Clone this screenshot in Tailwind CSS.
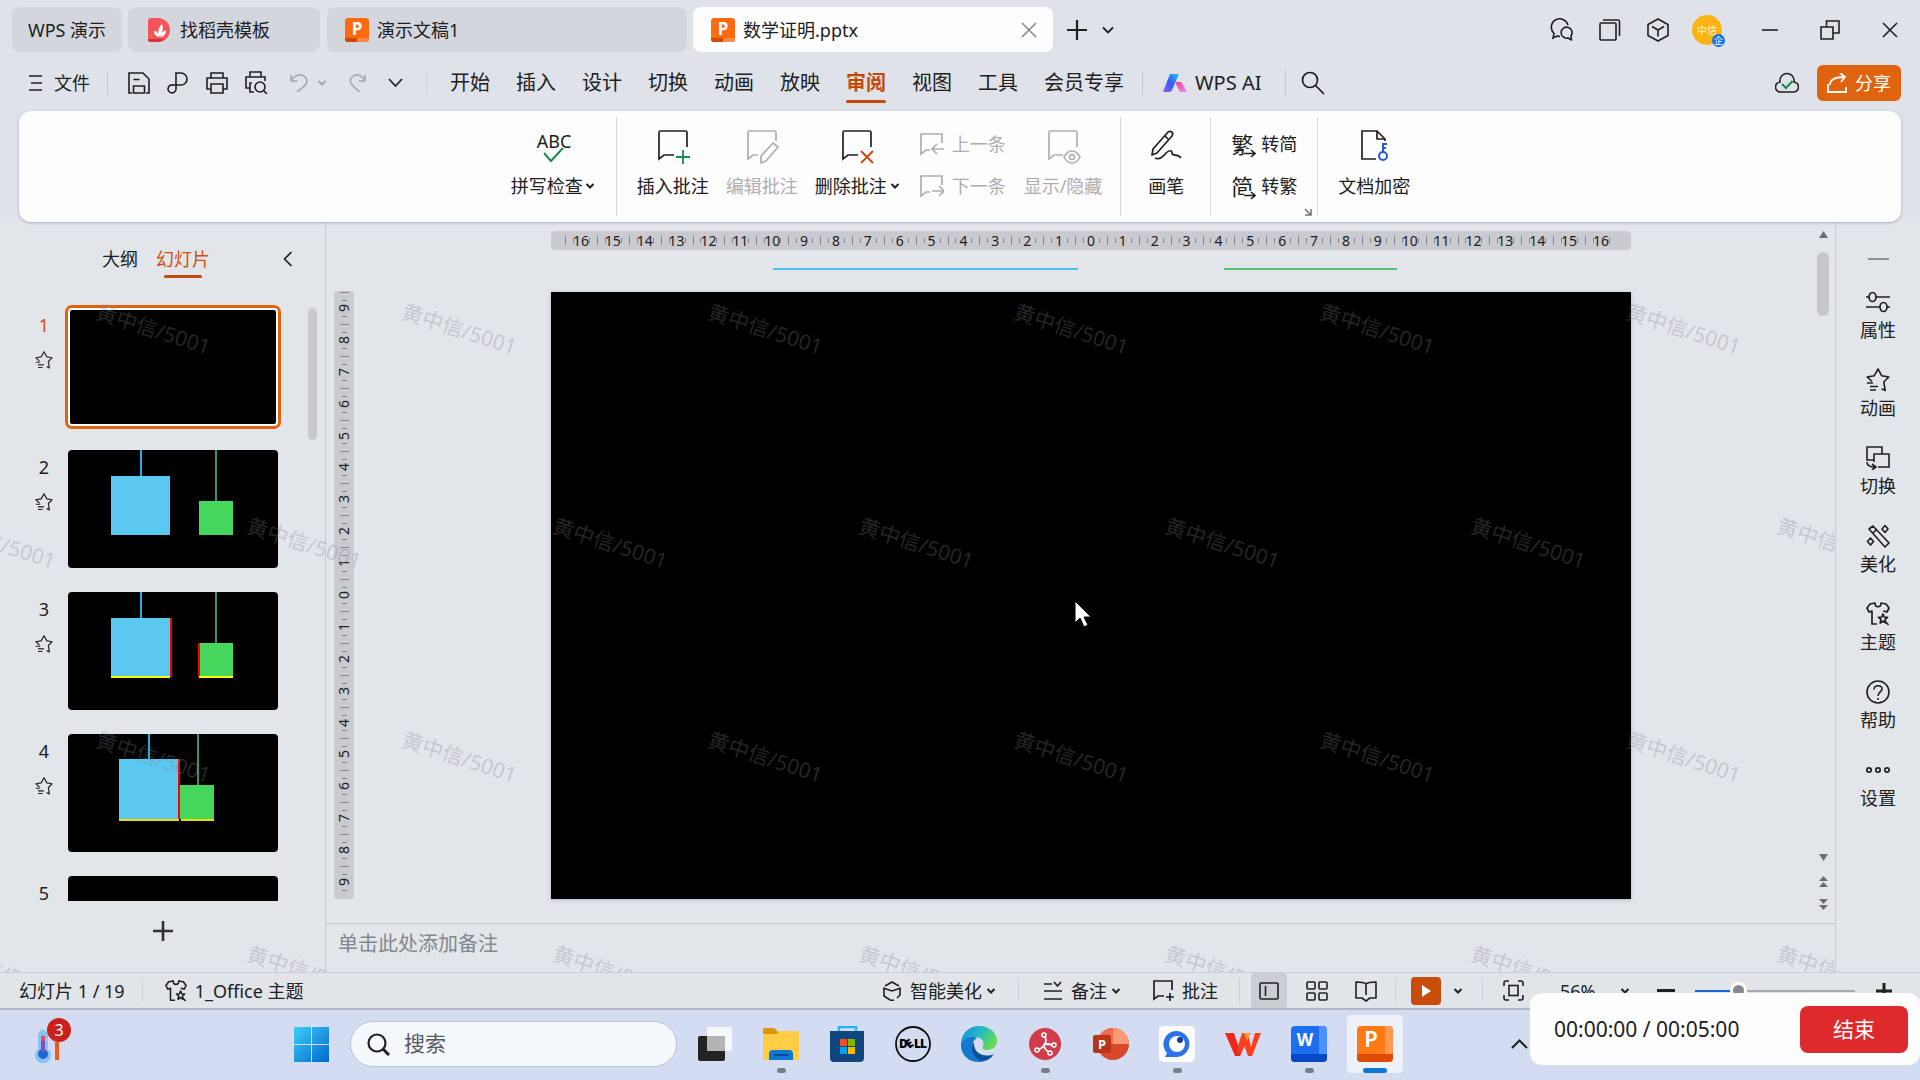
<!DOCTYPE html>
<html lang="zh-CN">
<head>
  <meta charset="UTF-8">
  <meta name="viewport" content="width=device-width, initial-scale=1">
  <title>数学证明.pptx - WPS 演示</title>
  <script src="https://cdn.jsdelivr.net/npm/@tailwindcss/browser@4"></script>
</head>
<body class="relative flex h-screen flex-col overflow-hidden bg-[#dfe2e9] font-['Noto_Sans','Noto_Sans_CJK_SC',sans-serif] text-lg leading-6 text-[#202020]">
  <!-- Shared icons -->
  <svg class="hidden">
    <symbol id="caret" viewBox="0 0 10 8"><path d="M1.500 2l3.500 3.500L8.500 2" fill="none" stroke="currentColor" stroke-width="2"/></symbol>
    <symbol id="ppt" viewBox="0 0 24 24">
      <rect width="24" height="24" rx="3" fill="#ff6a0d"/>
      <path d="M0 20h12v4H3a3 3 0 0 1-3-3z" fill="#d44800"/>
      <path d="M12 20h12v1a3 3 0 0 1-3 3h-9z" fill="#f58a4c"/>
      <text x="12" y="17" text-anchor="middle" font-size="17" font-weight="700" fill="#fff">P</text>
    </symbol>
    <symbol id="star" viewBox="0 0 24 24">
      <path d="M6 13.500L1.200 9l7-1.200L12 1l3.800 6.800 7 1.200-5 5 1.400 8.500-3.600-1.700M1 15h6M4 18.500h8M4 22h6" fill="none" stroke="currentColor" stroke-width="1.600" stroke-linejoin="round"/>
    </symbol>
    <symbol id="shirt" viewBox="0 0 24 24">
      <path d="M11 22H6V9L3 10 1 6l3-4 5-1c0 5 6 5 6 0l5 1 3 4-2 4-3-1v1" fill="none" stroke="currentColor" stroke-width="1.700" stroke-linejoin="round"/>
      <path d="M17 12l1.200 3 3.300.3-2.500 2.200.8 3.500-2.800-1.800-2.800 1.800.8-3.500-2.500-2.200 3.300-.3zM19 19l3.500 4" fill="none" stroke="currentColor" stroke-width="1.700" stroke-linejoin="round"/>
    </symbol>
    <symbol id="note" viewBox="0 0 32 32">
      <path d="M30 18V3.500A1.500 1.500 0 0 0 28.500 2h-25A1.500 1.500 0 0 0 2 3.500V30l5-4h10" fill="none" stroke="currentColor" stroke-width="1.700"/>
    </symbol>
  </svg>

  <!-- Title bar -->
  <header class="flex h-[59px] shrink-0 items-center pl-3">
    <button class="h-[45px] w-[110px] rounded-lg bg-[#d4d6dd]">WPS 演示</button>
    <button class="ml-[6px] flex h-[45px] w-[192px] items-center gap-2 rounded-lg bg-[#d4d6dd] pl-5">
      <svg class="size-6" viewBox="0 0 24 24"><path d="M0 3a3 3 0 0 1 3-3h7a12 12 0 0 1 0 24H3a3 3 0 0 1-3-3z" fill="#f5555a"/><path d="M0 21h17a12 12 0 0 1-7 3H3a3 3 0 0 1-3-3z" fill="#d8333b"/><path d="M11 19c-4-1-5-4-5-6 3 0 5 3 5 6zM11 19c-2-5 0-10 3-13 2 5 0 10-3 13zM12 19c1-4 3-6 6-7 0 4-2 7-6 7z" fill="#fff"/></svg>
      找稻壳模板
    </button>
    <button class="ml-[7px] flex h-[45px] w-[360px] items-center gap-2 rounded-lg bg-[#d4d6dd] pl-[18px]">
      <svg class="size-6"><use href="#ppt"/></svg>演示文稿1
    </button>
    <div class="ml-[6px] flex h-[45px] w-[360px] items-center gap-2 rounded-lg bg-[#fdfdfe] pr-4 pl-[18px]">
      <svg class="size-6"><use href="#ppt"/></svg>
      <span class="flex-1">数学证明.pptx</span>
      <button aria-label="关闭标签"><svg class="size-4 text-[#8a8a8a]" viewBox="0 0 16 16"><path d="M1 1l14 14M15 1L1 15" stroke="currentColor" stroke-width="1.600"/></svg></button>
    </div>
    <button class="ml-[13px]" aria-label="新建"><svg class="size-[22px]" viewBox="0 0 22 22"><path d="M11 1v20M1 11h20" stroke="currentColor" stroke-width="2.200"/></svg></button>
    <button class="ml-[14px]" aria-label="标签列表"><svg class="size-3" viewBox="0 0 12 12"><path d="M1 3.500l5 5 5-5" fill="none" stroke="currentColor" stroke-width="1.800"/></svg></button>

    <div class="ml-auto flex items-center pr-[22px]">
      <button aria-label="消息"><svg class="size-6" viewBox="0 0 24 24" fill="none" stroke="currentColor" stroke-width="1.600"><path d="M10 18.500c-2 0-2.500-.5-3-.5l-4 2 1-4.500A8.500 8.500 0 1 1 18 7"/><path d="M21.500 22l-.5-4a5.500 5.500 0 1 0-3 2z" stroke-linejoin="round"/></svg></button>
      <button class="ml-6" aria-label="窗口"><svg class="size-6" viewBox="0 0 24 24" fill="none" stroke="currentColor" stroke-width="1.600"><rect x="2" y="5" width="16" height="17" rx="1"/><path d="M5 2h15a1.500 1.500 0 0 1 1.500 1.500V18"/></svg></button>
      <button class="ml-6" aria-label="应用"><svg class="size-6" viewBox="0 0 24 24" fill="none" stroke="currentColor" stroke-width="1.600" stroke-linejoin="round"><path d="M12 1l10 5.500v11L12 23 2 17.500v-11z"/><path d="M6 8.500l6 3.500 6-3.500M12 12v6.500"/></svg></button>
      <button class="relative ml-[22px] size-[30px] rounded-full bg-[#fab414] text-[10px] leading-[30px] text-[#fff1c8]">中信
        <span class="absolute -right-[3px] -bottom-[2px] size-[13px] rounded-full bg-[#1473f0] text-[9px] leading-[13px] text-white">企</span>
      </button>
      <button class="ml-10" aria-label="最小化"><svg class="size-4" viewBox="0 0 16 16"><path d="M0 8h16" stroke="currentColor" stroke-width="1.600"/></svg></button>
      <button class="ml-[42px]" aria-label="还原"><svg class="size-5" viewBox="0 0 20 20" fill="none" stroke="currentColor" stroke-width="1.600"><path d="M1 7h12v12H1zM6.500 7V1H19v12h-6"/></svg></button>
      <button class="ml-[42px]" aria-label="关闭"><svg class="size-4" viewBox="0 0 16 16"><path d="M1 1l14 14M15 1L1 15" stroke="currentColor" stroke-width="1.600"/></svg></button>
    </div>
  </header>

  <!-- Menu row -->
  <nav class="flex h-[47px] shrink-0 items-center pr-[19px] pl-[29px]">
    <button class="flex items-center gap-3"><svg class="h-4 w-[13px]" viewBox="0 0 13 16"><path d="M0 1h13M2 8h11M0 15h13" stroke="currentColor" stroke-width="1.400"/></svg>文件</button>
    <span class="ml-[17px] h-6 w-px bg-[#c3c6cd]"></span>
    <button class="ml-5" aria-label="保存"><svg class="size-[22px]" viewBox="0 0 22 22" fill="none" stroke="currentColor" stroke-width="1.600"><path d="M4 21H1V1h14l6 6v14h-3"/><path d="M5.500 21v-7h11v7zM5.500 7.500h6" /></svg></button>
    <button class="ml-[17px]" aria-label="输出为PDF"><svg class="size-[22px]" viewBox="0 0 22 22" fill="none" stroke="currentColor" stroke-width="1.600"><path d="M9 13V1h5a6 6 0 0 1 0 12H6a4 4 0 1 0 3 4.500V13"/></svg></button>
    <button class="ml-[17px]" aria-label="打印"><svg class="size-[22px]" viewBox="0 0 22 22" fill="none" stroke="currentColor" stroke-width="1.600"><path d="M5 6V1h12v5M5 17H1V6h20v11h-4M5 12h12v9H5z"/></svg></button>
    <button class="ml-[17px]" aria-label="打印预览"><svg class="size-[23px]" viewBox="0 0 23 23" fill="none" stroke="currentColor" stroke-width="1.600"><path d="M5 6V1h11v5M5 17H1V6h19v4M7 12H5v9h4"/><circle cx="15" cy="16" r="5"/><path d="M18.500 19.500L22 23"/></svg></button>
    <button class="ml-[21px] text-[#a4a6b4]" aria-label="撤销"><svg class="size-[19px]" viewBox="0 0 19 19" fill="none" stroke="currentColor" stroke-width="1.600"><path d="M2 2v6h6M2 8c3-6 10-8 14-4s2 8-8 15"/></svg></button>
    <button class="ml-[9px] text-[#a4a6b4]" aria-label="撤销列表"><svg class="h-2 w-[10px]"><use href="#caret"/></svg></button>
    <button class="ml-[22px] text-[#a4a6b4]" aria-label="重做"><svg class="size-[19px]" viewBox="0 0 19 19" fill="none" stroke="currentColor" stroke-width="1.600"><path d="M16 2v6h-6M16 8C13 2 7 0 3 4s-1 8 8 15"/></svg></button>
    <button class="ml-5" aria-label="更多"><svg class="h-3 w-[15px]" viewBox="0 0 15 12"><path d="M1 2l6.500 7L14 2" fill="none" stroke="currentColor" stroke-width="1.700"/></svg></button>
    <span class="ml-[23px] h-6 w-px bg-[#cfd2d8]"></span>

    <div class="ml-[23px] flex gap-[26px] text-xl leading-6">
      <a href="#">开始</a><a href="#">插入</a><a href="#">设计</a><a href="#">切换</a><a href="#">动画</a><a href="#">放映</a>
      <a href="#" class="relative font-bold text-[#c24a08]">审阅<span class="absolute inset-x-0 -bottom-[8px] h-[3px] rounded-full bg-[#c24a08]"></span></a>
      <a href="#">视图</a><a href="#">工具</a><a href="#">会员专享</a>
    </div>
    <span class="ml-[18px] h-6 w-px bg-[#c3c6cd]"></span>
    <a href="#" class="ml-5 flex items-center gap-2 text-xl leading-6">
      <svg class="h-[18px] w-6" viewBox="0 0 24 18"><defs><linearGradient id="ai1" x1="1" y1="0" x2="0" y2="1"><stop stop-color="#20c8f4"/><stop offset=".5" stop-color="#3b5cf6"/><stop offset="1" stop-color="#8a5cf6"/></linearGradient><linearGradient id="ai2" x1="0" y1="0" x2="1" y2="1"><stop stop-color="#ff3b8d"/><stop offset="1" stop-color="#e58af8"/></linearGradient></defs><path d="M7 0h9L9 16c-.6 1.300-1.500 2-3 2H0z" fill="url(#ai1)"/><path d="M12 8h5c1 0 1.600.4 2 1.200L24 18h-5c-1.500 0-2.300-.6-3-2z" fill="url(#ai2)"/></svg>
      WPS AI
    </a>
    <span class="ml-6 h-7 w-px bg-[#c3c6cd]"></span>
    <button class="ml-[15px]" aria-label="搜索"><svg class="size-6" viewBox="0 0 24 24" fill="none" stroke="currentColor" stroke-width="1.700"><circle cx="9" cy="9" r="7.500"/><path d="M14.500 14.500L23 23"/></svg></button>

    <button class="ml-auto" aria-label="云同步"><svg class="h-[22px] w-6" viewBox="0 0 24 22" fill="none" stroke="currentColor" stroke-width="1.600"><path d="M6 20a5 5 0 0 1-1-10C4 4 9 1.500 12 1.500S20 4 19 10a5 5 0 0 1-1 10z"/><path d="M7 12l4 4 6.500-7" stroke="#148a4c" stroke-width="2"/></svg></button>
    <button class="ml-[18px] flex h-9 items-center gap-2 rounded-md bg-[#e0640f] px-[10px] text-white">
      <svg class="size-5" viewBox="0 0 20 20" fill="none" stroke="currentColor" stroke-width="1.800"><path d="M1 11v8h18v-5M3 12c0-5 4-8 15-8M13 0l5 4-4 5"/></svg>分享
    </button>
  </nav>

  <!-- Ribbon -->
  <section class="relative z-10 mx-[19px] mt-[5px] flex h-[111px] shrink-0 justify-center rounded-xl bg-[#fdfdfe] py-[6px] shadow-[0_1px_3px_#a9abc8]">
    <button class="flex flex-col items-center pt-3">
      <svg class="h-9 w-[86px]" viewBox="0 0 86 36"><text x="44" y="19" text-anchor="middle" font-size="18" fill="#202020">ABC</text><path d="M34 24l7 8 12-13" fill="none" stroke="#148a4c" stroke-width="1.900"/></svg>
      <span class="mt-[9px] flex items-center gap-[2px]">拼写检查<svg class="h-2 w-[10px]"><use href="#caret"/></svg></span>
    </button>
    <span class="mx-5 w-px bg-[#d9d9de]"></span>

    <button class="flex flex-col items-center pt-3">
      <span class="relative"><svg class="size-8"><use href="#note"/></svg><svg class="absolute -right-[2px] -bottom-[4px] size-4 bg-[#fdfdfe]" viewBox="0 0 16 16"><path d="M8 1v14M1 8h14" stroke="#148a4c" stroke-width="1.800"/></svg></span>
      <span class="mt-[13px]">插入批注</span>
    </button>
    <button class="ml-[17px] flex flex-col items-center pt-3 text-[#aeaeb2]">
      <span class="relative"><svg class="size-8"><use href="#note"/></svg><svg class="absolute -right-[2px] -bottom-[4px] h-6 w-[22px] bg-[#fdfdfe]" viewBox="0 0 22 24"><path d="M3 22v-7L15 2l5 4L8 20z" fill="none" stroke="currentColor" stroke-width="1.700" stroke-linejoin="round"/></svg></span>
      <span class="mt-[13px]">编辑批注</span>
    </button>
    <button class="ml-[17px] flex flex-col items-center pt-3">
      <span class="relative"><svg class="size-8"><use href="#note"/></svg><svg class="absolute -right-[2px] -bottom-[4px] size-4 bg-[#fdfdfe]" viewBox="0 0 16 16"><path d="M2 2l12 12M14 2L2 14" stroke="#d0430c" stroke-width="1.800"/></svg></span>
      <span class="mt-[13px] flex items-center gap-[3px]">删除批注<svg class="h-2 w-[10px]"><use href="#caret"/></svg></span>
    </button>
    <div class="ml-5 flex flex-col gap-[18px] pt-[15px] text-[#aeaeb2]">
      <button class="flex items-center gap-2"><svg class="size-6" viewBox="0 0 24 24" fill="none" stroke="currentColor" stroke-width="1.700"><path d="M22 11V2H1v20l5-4h4M24 17H13M17 12l-5 5 5 5"/></svg>上一条</button>
      <button class="flex items-center gap-2"><svg class="size-6" viewBox="0 0 24 24" fill="none" stroke="currentColor" stroke-width="1.700"><path d="M22 11V2H1v20l5-4h4M12 17h11M19 12l5 5-5 5"/></svg>下一条</button>
    </div>
    <button class="ml-[18px] flex flex-col items-center pt-3 text-[#aeaeb2]">
      <span class="relative"><svg class="size-8"><use href="#note"/></svg><svg class="absolute -right-[2px] -bottom-[3px] h-[14px] w-[18px] bg-[#fdfdfe]" viewBox="0 0 18 14" fill="none" stroke="currentColor" stroke-width="1.600"><path d="M1 7c4-8 12-8 16 0-4 8-12 8-16 0z"/><circle cx="9" cy="7" r="2.500"/></svg></span>
      <span class="mt-[13px]">显示/隐藏</span>
    </button>
    <span class="ml-[18px] w-px bg-[#d9d9de]"></span>

    <button class="mr-[26px] ml-[27px] flex flex-col items-center pt-3">
      <svg class="size-8" viewBox="0 0 32 32" fill="none" stroke="currentColor" stroke-width="1.700" stroke-linejoin="round"><path d="M2 26l1-6L18 3c3-2 6 1 4 4L7 24zM15 7l3 3"/><path d="M5 29c4 2 8-1 11-5 3-3 6-3 6 0 0 4 6 0 9 5"/></svg>
      <span class="mt-[13px]">画笔</span>
    </button>
    <span class="w-px bg-[#d9d9de]"></span>

    <div class="relative flex flex-col gap-[18px] px-5 pt-[15px]">
      <button class="flex items-center gap-2"><span class="relative text-[22px]">繁<svg class="absolute -right-[3px] -bottom-[2px] h-[9px] w-3 bg-[#fdfdfe]" viewBox="0 0 12 9"><path d="M0 4.500h10M7 1l4 3.500L7 8" fill="none" stroke="#202020" stroke-width="1.600"/></svg></span>转简</button>
      <button class="flex items-center gap-2"><span class="relative text-[22px]">简<svg class="absolute -right-[3px] -bottom-[2px] h-[9px] w-3 bg-[#fdfdfe]" viewBox="0 0 12 9"><path d="M0 4.500h10M7 1l4 3.500L7 8" fill="none" stroke="#202020" stroke-width="1.600"/></svg></span>转繁</button>
      <svg class="absolute right-[5px] bottom-0 size-2 text-[#707070]" viewBox="0 0 8 8"><path d="M1 1l6 6M7 1v6H1" fill="none" stroke="currentColor" stroke-width="1.500"/></svg>
    </div>
    <span class="w-px bg-[#d9d9de]"></span>

    <button class="ml-5 flex flex-col items-center pt-3">
      <svg class="size-8" viewBox="0 0 32 32" fill="none" stroke="currentColor" stroke-width="1.700"><path d="M18 30H4V2h15l8 8v2M19 2v8h8"/><circle cx="25" cy="27" r="4" stroke="#2657d9" stroke-width="2"/><path d="M25 23v-9M25 15h4M25 19h3" stroke="#2657d9" stroke-width="2"/></svg>
      <span class="mt-[13px]">文档加密</span>
    </button>
  </section>

  <!-- Workspace -->
  <main class="relative flex min-h-0 flex-1 bg-[#e2e5ea]">
    <!-- Slide list -->
    <aside class="flex w-[326px] flex-col border-r border-[#c6c8d8]">
      <div class="flex items-center pt-[25px] pr-8 pl-[102px]">
        <button>大纲</button>
        <button class="relative ml-[18px] text-[#d1500c]">幻灯片<span class="absolute inset-x-2 -bottom-[7px] h-[3px] rounded-full bg-[#c24a08]"></span></button>
        <button class="ml-auto" aria-label="收起"><svg class="h-4 w-[10px]" viewBox="0 0 10 16"><path d="M8.500 1L1.500 8l7 7" fill="none" stroke="currentColor" stroke-width="1.700"/></svg></button>
      </div>
      <div class="mt-[33px] flex min-h-0 flex-1 overflow-hidden">
        <ol class="flex flex-1 flex-col gap-6 pt-[4px]">
          <li class="flex h-[118px] shrink-0">
            <div class="flex w-[68px] flex-col items-center gap-[14px] pt-[5px] pl-5 text-[#d1500c]"><span>1</span><svg class="size-[18px] text-[#303030]"><use href="#star"/></svg></div>
            <svg class="h-[118px] w-[210px] rounded-sm border-2 border-white bg-black ring-3 ring-[#e0640f]" viewBox="0 0 210 118"></svg>
          </li>
          <li class="flex h-[118px] shrink-0">
            <div class="flex w-[68px] flex-col items-center gap-[14px] pt-[5px] pl-5"><span>2</span><svg class="size-[18px]"><use href="#star"/></svg></div>
            <svg class="h-[118px] w-[210px] rounded bg-black" viewBox="0 0 210 118"><path d="M73 0v26" stroke="#1eb0e4" stroke-width="2"/><path d="M148 0v51" stroke="#36966a" stroke-width="2"/><path d="M43 26h59v59H43z" fill="#5bc8f2"/><path d="M131 51h34v34h-34z" fill="#45d65c"/></svg>
          </li>
          <li class="flex h-[118px] shrink-0">
            <div class="flex w-[68px] flex-col items-center gap-[14px] pt-[5px] pl-5"><span>3</span><svg class="size-[18px]"><use href="#star"/></svg></div>
            <svg class="h-[118px] w-[210px] rounded bg-black" viewBox="0 0 210 118"><path d="M73 0v26" stroke="#1eb0e4" stroke-width="2"/><path d="M148 0v51" stroke="#36966a" stroke-width="2"/><path d="M43 26h59v58H43z" fill="#5bc8f2"/><path d="M131 51h34v33h-34z" fill="#45d65c"/><path d="M103 26v59M131 51v34" stroke="#f00" stroke-width="2"/><path d="M43 85h59M131 85h34" stroke="#ff0" stroke-width="2"/></svg>
          </li>
          <li class="flex h-[118px] shrink-0">
            <div class="flex w-[68px] flex-col items-center gap-[14px] pt-[5px] pl-5"><span>4</span><svg class="size-[18px]"><use href="#star"/></svg></div>
            <svg class="h-[118px] w-[210px] rounded bg-black" viewBox="0 0 210 118"><path d="M81 0v26" stroke="#1eb0e4" stroke-width="2"/><path d="M130 0v51" stroke="#36966a" stroke-width="2"/><path d="M51 25h60v60H51z" fill="#5bc8f2"/><path d="M112 51h34v34h-34z" fill="#45d65c"/><path d="M111 25v60" stroke="#f00" stroke-width="2"/><path d="M51 86h60M113 86h33" stroke="#e8dc00" stroke-width="2"/></svg>
          </li>
          <li class="flex h-[118px] shrink-0">
            <div class="flex w-[68px] flex-col items-center pt-[5px] pl-5"><span>5</span></div>
            <svg class="h-[118px] w-[210px] rounded bg-black" viewBox="0 0 210 118"></svg>
          </li>
        </ol>
        <div class="w-[17px] pt-1"><div class="h-[132px] w-[9px] rounded-full bg-[#c8c9cd]"></div></div>
      </div>
      <button class="mx-auto mt-[19px] mb-[30px]" aria-label="新建幻灯片"><svg class="size-[22px]" viewBox="0 0 22 22"><path d="M11 1v20M1 11h20" stroke="#303030" stroke-width="2.600"/></svg></button>
    </aside>

    <!-- Editor -->
    <div class="flex min-w-0 flex-1 flex-col">
      <div class="flex min-h-0 flex-1 pl-2">
        <div id="ruler-v" class="mt-[69px] mb-6 flex w-5 flex-col rounded-sm bg-[#c9cbd1] py-[1px] text-sm"></div>
        <div class="mr-[180px] mb-6 ml-[197px] flex min-w-0 flex-1 flex-col pt-[9px]">
          <div id="ruler-h" class="flex h-[19px] shrink-0 rounded-sm bg-[#c9cbd1] px-[14px] text-sm"></div>
          <div class="flex h-[42px] shrink-0 items-start pt-[18px]">
            <div class="ml-[222px] h-[2px] w-[305px] bg-[#50bdec]"></div>
            <div class="ml-[146px] h-[2px] w-[173px] bg-[#4fc26a]"></div>
          </div>
          <div class="relative flex-1 bg-black shadow-[0_1px_4px_#b4b6d0]">
            <!-- Mouse pointer -->
            <svg class="absolute top-1/2 left-1/2 z-20 mt-1 -ml-[17px] h-[29px] w-[19px]" viewBox="0 0 19 29"><path d="M1 1v22l5-5 4 9 4-2-4-8h7z" fill="#fff" stroke="#000" stroke-width="1"/></svg>
          </div>
        </div>
        <div class="flex w-6 flex-col items-center pt-[9px] text-[#6d6d6d]">
          <svg class="h-2 w-[9px]" viewBox="0 0 9 8"><path d="M4.500 0L9 7H0z" fill="currentColor"/></svg>
          <div class="mt-[13px] h-[64px] w-3 rounded-full bg-[#c5c6ca]"></div>
          <svg class="mt-auto h-2 w-[9px]" viewBox="0 0 9 8"><path d="M4.500 8L0 1h9z" fill="currentColor"/></svg>
          <svg class="mt-[15px] h-[11px] w-[9px]" viewBox="0 0 9 11"><path d="M4.500 0L9 5H0zM4.500 6L9 11H0z" fill="currentColor"/></svg>
          <svg class="mt-[12px] mb-[13px] h-[11px] w-[9px]" viewBox="0 0 9 11"><path d="M4.500 5L0 0h9zM4.500 11L0 6h9z" fill="currentColor"/></svg>
        </div>
      </div>
      <label for="notes" class="sr-only">备注</label>
      <textarea id="notes" class="h-[49px] w-full resize-none border-t border-[#c6c8cc] px-3 pt-[8px] text-xl leading-6 placeholder:text-[#85878c]" placeholder="单击此处添加备注"></textarea>
    </div>

    <!-- Task pane bar -->
    <aside class="flex w-[85px] flex-col items-center border-l border-[#c9ccd0] pt-[36px]">
      <span class="mb-[30px] h-[2px] w-[21px] bg-[#909090]"></span>
      <div class="flex flex-col gap-[26px]">
        <button class="flex flex-col items-center gap-1"><svg class="size-6" viewBox="0 0 24 24" fill="none" stroke="currentColor" stroke-width="1.700"><path d="M0 7h3M10 7h14M0 17h14M21 17h3"/><ellipse cx="6.500" cy="7" rx="3.500" ry="4.500"/><ellipse cx="17.500" cy="17" rx="3.500" ry="4.500"/></svg>属性</button>
        <button class="flex flex-col items-center gap-1"><svg class="size-6"><use href="#star"/></svg>动画</button>
        <button class="flex flex-col items-center gap-1"><svg class="size-6" viewBox="0 0 24 24" fill="none" stroke="currentColor" stroke-width="1.600"><path d="M8 14H1V1h15v7M8 16V8h15v13H12M1 16c0 4 3 5 8 5M6 18l4 3-4 3"/></svg>切换</button>
        <button class="flex flex-col items-center gap-1"><svg class="size-6" viewBox="0 0 24 24" fill="none" stroke="currentColor" stroke-width="1.600" stroke-linejoin="round"><path d="M3 5l4-3 16 17-4 4zM7 9l4-4M19 1.500l3 3.500-3 3.500L16 5zM4.500 14l3 3.500-3 3.500-3-3.500z"/></svg>美化</button>
        <button class="flex flex-col items-center gap-1"><svg class="size-6"><use href="#shirt"/></svg>主题</button>
        <button class="flex flex-col items-center gap-1"><svg class="size-6" viewBox="0 0 24 24" fill="none" stroke="currentColor" stroke-width="1.600"><circle cx="12" cy="12" r="11"/><path d="M8 9.500c0-5 8-5 8-.5 0 3-4 3-4 7M12 18v2"/></svg>帮助</button>
        <button class="flex flex-col items-center gap-1"><svg class="size-6" viewBox="0 0 24 24" fill="none" stroke="currentColor" stroke-width="1.700"><circle cx="3" cy="12" r="2.200"/><circle cx="12" cy="12" r="2.200"/><circle cx="21" cy="12" r="2.200"/></svg>设置</button>
      </div>
    </aside>

    <!-- Watermark -->
    <div id="watermark" class="pointer-events-none absolute inset-y-0 right-[85px] left-0 overflow-hidden text-[21px] text-[#80808c]/30"></div>
  </main>

  <!-- Status bar -->
  <footer class="flex h-9 shrink-0 items-center border-t border-[#c9cbd8] bg-[#e1e4e9] pl-[19px]">
    <span>幻灯片 1 / 19</span>
    <span class="ml-[17px] h-6 w-px bg-[#cdd0d6]"></span>
    <button class="ml-[22px] flex items-center gap-2"><svg class="size-[22px]"><use href="#shirt"/></svg>1_Office 主题</button>

    <div class="ml-auto flex items-center pr-[28px]">
      <button class="flex items-center gap-2"><svg class="size-5" viewBox="0 0 20 20" fill="none" stroke="currentColor" stroke-width="1.600"><path d="M3 5l7-4 7 4M1 7l9 3 9-3M2 7v8l7 4.500L12 19M18 7v7l-3 3"/></svg>智能美化<svg class="-ml-1 h-2 w-[10px]"><use href="#caret"/></svg></button>
      <span class="ml-[22px] h-6 w-px bg-[#cdd0d6]"></span>
      <button class="ml-6 flex items-center gap-2"><svg class="size-5" viewBox="0 0 20 20" fill="none" stroke="currentColor" stroke-width="1.700"><path d="M1 3h8M11 1l3.500 4L18 1M1 10h18M1 18h18"/></svg>备注<svg class="-ml-1 h-2 w-[10px]"><use href="#caret"/></svg></button>
      <button class="ml-8 flex items-center gap-2"><svg class="size-[21px]" viewBox="0 0 21 21" fill="none" stroke="currentColor" stroke-width="1.700"><path d="M19 10V1H1v18l4-3h6M17 13v8M13 17h8"/></svg>批注</button>
      <span class="ml-[21px] h-6 w-px bg-[#cdd0d6]"></span>
      <button class="ml-[11px] flex h-9 w-9 items-center justify-center rounded bg-[#cbcdd4]" aria-label="普通视图"><svg class="size-5" viewBox="0 0 20 20" fill="none" stroke="currentColor" stroke-width="1.600"><rect x="1" y="2" width="18" height="16" rx="1"/><path d="M6.500 5v10"/></svg></button>
      <button class="ml-[19px]" aria-label="幻灯片浏览"><svg class="size-[22px]" viewBox="0 0 22 22" fill="none" stroke="currentColor" stroke-width="1.600"><rect x="1" y="2" width="8" height="7" rx="1"/><rect x="13" y="2" width="8" height="7" rx="1"/><rect x="1" y="13" width="8" height="7" rx="1"/><rect x="13" y="13" width="8" height="7" rx="1"/></svg></button>
      <button class="ml-[27px]" aria-label="阅读视图"><svg class="size-[22px]" viewBox="0 0 22 22" fill="none" stroke="currentColor" stroke-width="1.600" stroke-linejoin="round"><path d="M11 4C9 2 5 2 1 2v16h6l4 3 4-3h6V2c-4 0-8 0-10 2zM11 4v11"/></svg></button>
      <span class="ml-[18px] h-6 w-px bg-[#cdd0d6]"></span>
      <button class="ml-[15px] flex h-7 w-[30px] items-center justify-center rounded bg-[#c84c0a]" aria-label="放映"><svg class="h-3 w-[10px]" viewBox="0 0 10 12"><path d="M1 0l9 6-9 6z" fill="#fff"/></svg></button>
      <button class="ml-[12px]" aria-label="放映选项"><svg class="h-2 w-[10px]"><use href="#caret"/></svg></button>
      <span class="ml-[19px] h-6 w-px bg-[#cdd0d6]"></span>
      <button class="ml-5" aria-label="适应窗口"><svg class="size-[21px]" viewBox="0 0 21 21" fill="none" stroke="currentColor" stroke-width="1.600"><path d="M1 6V3a2 2 0 0 1 2-2h3M15 1h3a2 2 0 0 1 2 2v3M20 15v3a2 2 0 0 1-2 2h-3M6 20H3a2 2 0 0 1-2-2v-3"/><rect x="6" y="5.500" width="9" height="10"/></svg></button>
      <span class="relative ml-[36px] flex items-center">
        <select class="w-[70px] appearance-none bg-transparent" aria-label="缩放比例"><option>56%</option></select>
        <svg class="pointer-events-none absolute right-0 h-2 w-[10px]"><use href="#caret"/></svg>
      </span>
      <button class="ml-[27px]" aria-label="缩小"><svg class="h-[3px] w-[18px]" viewBox="0 0 18 3"><path d="M0 1.500h18" stroke="currentColor" stroke-width="3"/></svg></button>
      <span class="relative ml-5 flex h-6 w-[160px] items-center">
        <input type="range" min="0" max="100" value="27" aria-label="缩放" class="absolute inset-0 h-6 w-full opacity-0">
        <span class="h-[2px] w-full bg-[#a8abb0]"><span class="block h-full w-[27%] bg-[#1765d8]"></span></span>
        <span class="pointer-events-none absolute left-[27%] -ml-2 size-[17px] rounded-full border-[3px] border-white bg-[#86888a]"></span>
      </span>
      <button class="ml-[21px]" aria-label="放大"><svg class="size-[16px]" viewBox="0 0 16 16"><path d="M8 0v16M0 8h16" stroke="currentColor" stroke-width="3"/></svg></button>
    </div>
  </footer>

  <!-- Taskbar -->
  <div class="flex h-[72px] shrink-0 items-center border-t-2 border-[#b1b6ca] bg-[#d3dcf1] pb-[2px] text-xl">
    <button class="relative ml-[35px] h-[52px] w-[38px]" aria-label="天气">
      <svg class="h-[52px] w-[24px]" viewBox="0 0 24 52"><path d="M3 17a5 5 0 0 1 10 0v14a8 8 0 1 1-10 0z" fill="#86c5f6"/><circle cx="8" cy="36" r="5" fill="#1668d6"/><path d="M8 18v17" stroke="#7b4fc0" stroke-width="4"/><path d="M8 18v5" stroke="#ee4b60" stroke-width="4"/><path d="M22 24v18" stroke="#ee5a1c" stroke-width="4"/></svg>
      <span class="absolute top-0 right-[2px] size-6 rounded-full bg-[#c9221c] text-base leading-6 text-white">3</span>
    </button>
    <button class="ml-[221px]" aria-label="开始"><svg class="size-[35px]" viewBox="0 0 35 35"><defs><linearGradient id="win" x1="0" y1="0" x2="1" y2="1"><stop stop-color="#41cdf8"/><stop offset="1" stop-color="#0068cc"/></linearGradient></defs><path d="M0 0h17v17H0zM18 0h17v17H18zM0 18h17v17H0zM18 18h17v17H18z" fill="url(#win)"/></svg></button>
    <label class="ml-[21px] flex h-[46px] w-[327px] items-center gap-[14px] rounded-full border border-[#b9c0d2] bg-[#f4f8fd] pl-4">
      <svg class="size-[23px]" viewBox="0 0 23 23" fill="none" stroke="#202020"><circle cx="10" cy="10" r="8.500" stroke-width="2.200"/><path d="M16 16l6 6" stroke-width="3"/></svg>
      <input type="text" class="min-w-0 flex-1 text-[21px] outline-none placeholder:text-[#55585e]" placeholder="搜索" aria-label="搜索">
    </label>

    <div class="ml-[5px] flex">
      <button class="flex h-[58px] w-[66px] items-center justify-center" aria-label="任务视图"><svg class="size-9" viewBox="0 0 36 36"><path d="M10 1h25v24H10z" fill="#f6f7fa"/><rect x="1" y="10" width="27" height="25" rx="2" fill="#232323"/><path d="M10 10h18v15H10z" fill="#b4b4b6"/></svg></button>
      <button class="relative flex h-[58px] w-[66px] items-center justify-center" aria-label="文件资源管理器"><svg class="size-9" viewBox="0 0 36 36"><path d="M0 4a2 2 0 0 1 2-2h9l4 4v8H0z" fill="#dd9500"/><path d="M0 8h14l2-3h18a2 2 0 0 1 2 2v27H0z" fill="#ffcd45"/><path d="M6 34v-6a4 4 0 0 1 4-4h16a4 4 0 0 1 4 4v6z" fill="#0c78d0"/><path d="M11 29h14" stroke="#064a90" stroke-width="2"/></svg><span class="absolute bottom-0 h-[5px] w-[9px] rounded-full bg-[#777d8c]"></span></button>
      <button class="flex h-[58px] w-[66px] items-center justify-center" aria-label="应用商店"><svg class="size-9" viewBox="0 0 36 36"><path d="M10 7V1h17v6" fill="none" stroke="#25b5ef" stroke-width="2.500"/><path d="M1 5h34v27a4 4 0 0 1-4 4H5a4 4 0 0 1-4-4z" fill="#10467e"/><path d="M11 13h7v7h-7z" fill="#f25022"/><path d="M19 13h7v7h-7z" fill="#7fba00"/><path d="M11 21h7v7h-7z" fill="#00a4ef"/><path d="M19 21h7v7h-7z" fill="#ffb900"/></svg></button>
      <button class="flex h-[58px] w-[66px] items-center justify-center" aria-label="DELL"><svg class="size-9" viewBox="0 0 36 36"><circle cx="18" cy="18" r="17" fill="none" stroke="#101010" stroke-width="1.800"/><g font-size="12" font-weight="800" font-family="Open Sans"><text x="4" y="22">D</text><text x="0" y="0" transform="translate(14 23) rotate(-35)">E</text><text x="19" y="22">L</text><text x="25" y="22">L</text></g></svg></button>
      <button class="flex h-[58px] w-[66px] items-center justify-center" aria-label="Edge"><svg class="size-9" viewBox="0 0 36 36"><defs><linearGradient id="edge" x1="0" y1="0" x2="1" y2=".5"><stop stop-color="#1485dd"/><stop offset=".5" stop-color="#22b8c8"/><stop offset="1" stop-color="#62da55"/></linearGradient></defs><path d="M0 17C1 6 9 0 18 0c11 0 18 7 18 15 0 6-5 9-10 9-4 0-5-2-4-4 2-5-2-9-8-9S2 13 0 17z" fill="url(#edge)"/><path d="M0 17c3-5 10-8 16-5-6 3-6 11-1 16 4 4 11 5 17 1-4 6-10 7-14 7C7 36-1 28 0 17z" fill="#1279ce"/><path d="M13 16c-5 6-1 16 8 19 5-1 9-3 12-7-9 4-21 0-20-12z" fill="#0c4f98"/></svg></button>
      <button class="relative flex h-[58px] w-[66px] items-center justify-center" aria-label="思维导图"><svg class="size-9" viewBox="0 0 36 36"><rect x="2" y="2" width="32" height="32" rx="16" fill="#d23c4a"/><path d="M16 10c4 2 4 5 1 9-1 3-4 4-7 5M17 18c4 0 6 0 9 1M17 19c0 3 1 5 5 7" fill="none" stroke="#fff" stroke-width="1.800"/><g fill="#d23c4a" stroke="#fff" stroke-width="1.600"><circle cx="17" cy="9" r="2"/><circle cx="10" cy="24" r="2"/><circle cx="27" cy="19" r="2"/><circle cx="23" cy="27" r="2"/></g></svg><span class="absolute bottom-0 h-[5px] w-[9px] rounded-full bg-[#777d8c]"></span></button>
      <button class="flex h-[58px] w-[66px] items-center justify-center" aria-label="PowerPoint"><svg class="size-9" viewBox="0 0 36 36"><circle cx="20" cy="18" r="16" fill="#d9482b"/><path d="M20 2a16 16 0 0 1 16 16H20z" fill="#ff9a78"/><path d="M20 2v16H4A16 16 0 0 1 20 2z" fill="#ee6c4c"/><rect x="0" y="9" width="18" height="18" rx="2" fill="#b8341b"/><text x="9" y="23" text-anchor="middle" font-size="13" font-weight="700" fill="#fff">P</text></svg></button>
      <button class="relative flex h-[58px] w-[66px] items-center justify-center" aria-label="浏览器"><svg class="size-9" viewBox="0 0 36 36"><rect width="36" height="36" rx="5" fill="#fdfdff"/><path d="M6 31l2-4A13 13 0 1 1 18 31z" fill="#2a73e8"/><circle cx="18" cy="18" r="8" fill="#fff"/><circle cx="21" cy="14" r="3" fill="#17418c"/></svg><span class="absolute bottom-0 h-[5px] w-[9px] rounded-full bg-[#777d8c]"></span></button>
      <button class="flex h-[58px] w-[66px] items-center justify-center" aria-label="WPS"><svg class="size-9" viewBox="0 0 36 36"><path d="M0 7h9l5 15 4-10 5 0-8 18h-5z" fill="#f0281c"/><path d="M17 7h6l3 14 4-14h6l-9 23h-4l-4-11-4 8-3-4z" fill="#f8421c"/><path d="M19 7h7l-4 8z" fill="#ff9a3c"/></svg></button>
      <button class="relative flex h-[58px] w-[66px] items-center justify-center" aria-label="WPS 文字"><svg class="size-9" viewBox="0 0 36 36"><rect width="36" height="36" rx="4" fill="#1e6ef0"/><path d="M28 0h4a4 4 0 0 1 4 4v24h-8z" fill="#4c92ff"/><path d="M0 28h36v4a4 4 0 0 1-4 4H4a4 4 0 0 1-4-4z" fill="#0648c8"/><text x="14" y="20" text-anchor="middle" font-size="17" font-weight="700" fill="#fff">W</text></svg><span class="absolute bottom-0 h-[5px] w-[9px] rounded-full bg-[#777d8c]"></span></button>
      <button class="relative mx-[5px] flex h-[58px] w-14 items-center justify-center rounded bg-[#edf2fa]" aria-label="WPS 演示"><svg class="size-9" viewBox="0 0 36 36"><rect width="36" height="36" rx="4" fill="#ff7a14"/><path d="M28 0h4a4 4 0 0 1 4 4v24h-8z" fill="#ff9a4e"/><path d="M0 28h36v4a4 4 0 0 1-4 4H4a4 4 0 0 1-4-4z" fill="#dd4c08"/><text x="14" y="21" text-anchor="middle" font-size="22" font-weight="600" fill="#fff">P</text></svg><span class="absolute bottom-0 h-[5px] w-6 rounded-full bg-[#0b78d4]"></span></button>
    </div>
    <button class="mr-[392px] ml-auto" aria-label="显示隐藏的图标"><svg class="h-[10px] w-[17px]" viewBox="0 0 17 10"><path d="M1 9l7.500-7.500L16 9" fill="none" stroke="#202020" stroke-width="2"/></svg></button>
  </div>

  <!-- Recording timer -->
  <div class="absolute right-0 bottom-[15px] z-30 flex h-[72px] w-[390px] items-center justify-between rounded-xl bg-[#fdfdfe] pr-3 pl-6 text-[21px]">
    <span>00:00:00 / 00:05:00</span>
    <button class="h-[47px] w-[108px] rounded-lg bg-[#de2a2c] text-white">结束</button>
  </div>

  <script>
    // Horizontal ruler: one cell per centimetre, 16 .. 0 .. 16
    const rulerH = document.getElementById('ruler-h');
    for (let i = -16; i <= 16; i++) {
      rulerH.insertAdjacentHTML('beforeend',
        `<div class="relative flex flex-1 basis-0 items-center justify-center">
          <span class="absolute left-0 h-[9px] w-px bg-[#85878d]"></span>
          <span class="absolute left-1/4 h-[5px] w-px bg-[#85878d]"></span>
          <span class="absolute left-3/4 h-[5px] w-px bg-[#85878d]"></span>
          <span class="relative leading-[19px]">${Math.abs(i)}</span>
        </div>`);
    }

    // Vertical ruler: 9 .. 0 .. 9, labels turned to read upwards
    const rulerV = document.getElementById('ruler-v');
    for (let i = -9; i <= 9; i++) {
      rulerV.insertAdjacentHTML('beforeend',
        `<div class="relative flex min-h-0 flex-1 basis-0 items-center justify-center">
          <span class="absolute top-0 h-px w-[9px] bg-[#85878d]"></span>
          <span class="absolute top-1/4 h-px w-[5px] bg-[#85878d]"></span>
          <span class="absolute top-3/4 h-px w-[5px] bg-[#85878d]"></span>
          <span class="relative -rotate-90 leading-5">${Math.abs(i)}</span>
        </div>`);
    }

    // Watermark rows, every other one shifted by half a step
    const watermark = document.getElementById('watermark');
    const item = '<span class="w-[306px] shrink-0 text-center"><span class="inline-block rotate-18">黄中信/5001</span></span>';
    for (let row = 0; row < 4; row++) {
      const shift = row % 2 ? '-ml-[155px]' : 'ml-0';
      const count = row % 2 ? 7 : 6;
      watermark.insertAdjacentHTML('beforeend', `<div class="flex h-[214px] items-center ${shift}">${item.repeat(count)}</div>`);
    }
  </script>
</body>
</html>
